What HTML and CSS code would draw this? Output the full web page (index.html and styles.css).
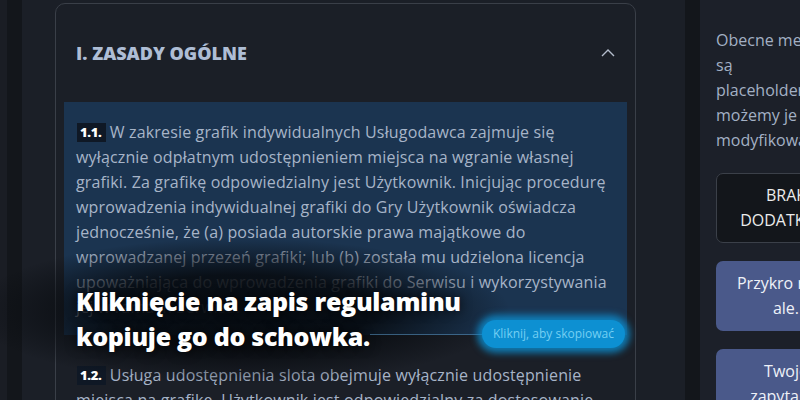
FILE: index.html
```html
<!DOCTYPE html>
<html lang="pl">
<head>
<meta charset="utf-8">
<title>Regulamin</title>
<link rel="stylesheet" href="styles.css">
</head>
<body>
<div class="app">
  <div class="edge"></div>
  <div class="rail"></div>
  <main class="main">
    <section class="card">
      <header class="card-head">
        <h2 class="card-title">I. ZASADY OGÓLNE</h2>
        <svg class="chevron" width="14" height="8" viewBox="0 0 14 8"><polyline points="1,7 7,1 13,7" fill="none" stroke="#b4bdcc" stroke-width="1.4"/></svg>
      </header>
      <div class="items">
        <p class="item active"><span class="num">1.1.</span> W zakresie grafik indywidualnych Usługodawca zajmuje się wyłącznie odpłatnym udostępnieniem miejsca na wgranie własnej grafiki. Za grafikę odpowiedzialny jest Użytkownik. Inicjując procedurę wprowadzenia indywidualnej grafiki do Gry Użytkownik oświadcza jednocześnie, że (a) posiada autorskie prawa majątkowe do wprowadzanej przezeń grafiki; lub (b) została mu udzielona licencja upoważniająca do wprowadzenia grafiki do Serwisu i wykorzystywania jej w ramach Serwisu.</p>
        <p class="item"><span class="num">1.2.</span> Usługa udostępnienia slota obejmuje wyłącznie udostępnienie miejsca na grafikę. Użytkownik jest odpowiedzialny za dostosowanie grafiki do wymagań technicznych.</p>
      </div>
    </section>
  </main>
  <div class="rail"></div>
  <aside class="side">
    <p class="side-text">Obecne metody są placeholderami, możemy je modyfikować.</p>
    <div class="box box-dark">BRAK DODATKÓW</div>
    <div class="box box-blue">Przykro nam, ale.</div>
    <div class="box box-blue">Twoje zapytanie zostało wysłane.</div>
  </aside>
</div>
<div class="tour">
  <div class="tour-shade"></div>
  <p class="tour-text">Kliknięcie na zapis regulaminu kopiuje go do schowka.</p>
  <div class="tour-line"></div>
  <div class="tour-pill">Kliknij, aby skopiować</div>
</div>
</body>
</html>
```
FILE: styles.css
```css
* { box-sizing: border-box; }
html, body { margin: 0; padding: 0; }
body {
  width: 800px;
  height: 400px;
  overflow: hidden;
  background: #1b1f27;
  font-family: "Open Sans", "Noto Sans", sans-serif;
  position: relative;
}
.app {
  display: grid;
  grid-template-columns: 7px 15px 663px 15px 1fr;
  height: 400px;
  overflow: hidden;
}
.edge { background: #1a1d24; }
.rail { background: #13161b; }
.main {
  padding: 3px 0 0 33px;
  overflow: hidden;
}
.card {
  width: 581px;
  border: 1px solid #3a3f48;
  border-radius: 10px;
  background: #1b1f27;
  height: 420px;
}
.card-head {
  height: 98px;
  padding: 0 20px;
  display: flex;
  align-items: center;
  justify-content: space-between;
}
.card-title {
  margin: 0;
  font-size: 18px;
  font-weight: 800;
  color: #aebdd5;
  letter-spacing: 0;
}
.chevron { display: block; }
.items {
  padding: 0 8px;
  display: flex;
  flex-direction: column;
  gap: 10px;
}
.item {
  margin: 0;
  padding: 18px 12px 15px;
  font-size: 16px;
  line-height: 25px;
  letter-spacing: 0.15px;
  color: #a7b4c8;
}
.item.active { background: #1b3450; }
.num {
  display: inline-block;
  background: #0f1825;
  color: #ffffff;
  font-weight: 800;
  font-size: 13px;
  line-height: 19px;
  letter-spacing: -0.3px;
  padding: 0 4px 0 3px;
  margin-left: 1px;
  vertical-align: 1px;
}
.side {
  padding: 28px 16px 0;
  overflow: hidden;
  background: #1c2029;
}
.side-text {
  margin: 0 0 20px;
  width: 125px;
  font-size: 16px;
  line-height: 25px;
  color: #a3b0c4;
}
.box {
  width: 140px;
  padding: 10px 14px;
  border-radius: 7px;
  font-size: 16px;
  line-height: 25px;
  text-align: center;
  margin-bottom: 18px;
}
.box-dark {
  background: #13161b;
  border: 1px solid #3b4049;
  color: #ececec;
  padding: 9px 14px;
}
.box-blue {
  background: #4a598a;
  color: #eef1f8;
}
.tour {
  position: absolute;
  inset: 0;
  pointer-events: none;
}
.tour-shade {
  position: absolute;
  left: -30px;
  top: 222px;
  width: 540px;
  height: 162px;
  background: radial-gradient(ellipse closest-side at 50% 55%, rgba(6,9,13,0.93) 0%, rgba(6,9,13,0.85) 50%, rgba(6,9,13,0.35) 80%, rgba(6,9,13,0) 100%);
}
.tour-text {
  position: absolute;
  left: 76px;
  top: 284px;
  width: 400px;
  margin: 0;
  font-size: 25px;
  line-height: 35px;
  font-weight: 800;
  color: #ffffff;
  letter-spacing: -0.3px;
  text-shadow: 0 0 12px rgba(0,0,0,0.8);
}
.tour-line {
  position: absolute;
  left: 370px;
  top: 334px;
  width: 114px;
  height: 1px;
  background: rgba(90,150,195,0.55);
}
.tour-pill {
  position: absolute;
  left: 482px;
  top: 320px;
  width: 143px;
  height: 28px;
  border-radius: 14px;
  background: #0d90d2;
  box-shadow: 0 0 7px 5px rgba(13,144,210,0.8);
  color: #74cff3;
  font-size: 12px;
  line-height: 28px;
  text-align: center;
}
```
